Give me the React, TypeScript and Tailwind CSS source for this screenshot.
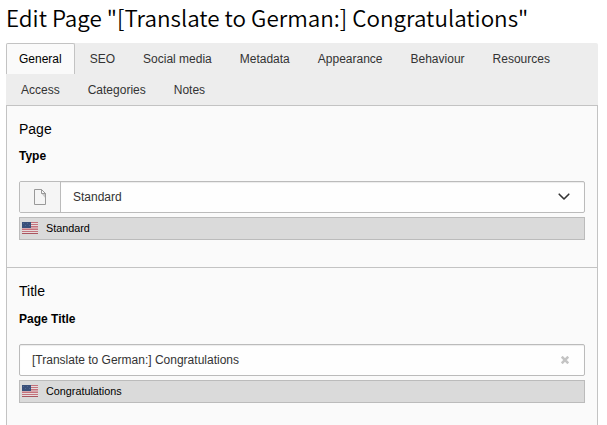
import React from "react";

const tabs = ["General", "SEO", "Social media", "Metadata", "Appearance", "Behaviour", "Resources", "Access", "Categories", "Notes"];

function UsFlag() {
  return (
    <svg width="16" height="12" viewBox="0 0 16 12" shapeRendering="crispEdges" className="shrink-0">
      <rect width="16" height="12" fill="#e6dcdd" />
      {[0, 2, 4, 7, 9].map((y) => (
        <rect key={y} y={y} width="16" height="1" fill="#c4727c" />
      ))}
      <rect y="5" width="16" height="2" fill="#d5a5ab" />
      <rect y="11" width="16" height="1" fill="#a95660" />
      <rect width="9" height="6" fill="#39507a" />
      {[1, 3, 5, 7].map((x) => (
        <rect key={x} x={x} y={x % 4 === 1 ? 1 : 3} width="1" height="1" fill="#526790" />
      ))}
    </svg>
  );
}

function PageIcon() {
  return (
    <svg width="16" height="16" viewBox="0 0 16 16">
      <path d="M9 4h5v6z" fill="#c8c8c8" />
      <path d="M2.5 .5H9.5L13.5 4.5V15.5H2.5z" fill="none" stroke="#999" />
      <path d="M9.5 .5V4.5H13.5" fill="none" stroke="#999" />
    </svg>
  );
}

function Translation({ text }: { text: string }) {
  return (
    <div className="mt-1 flex h-[23px] items-center border border-[#bbb] bg-[#dadada] pb-px pl-0.5 text-[10.8px] leading-4 text-black">
      <UsFlag />
      <span className="ml-2">{text}</span>
    </div>
  );
}

function Section({ title, label, labelGap, children }: { title: string; label: string; labelGap: string; children: React.ReactNode }) {
  return (
    <section className="h-[162px] border-b border-[#c3c3c3] px-3 pt-[13px]">
      <h2 className="h-5 text-[14px] leading-5 text-black">{title}</h2>
      <div className={`${labelGap} h-[34px] text-[12px] leading-[18px] font-bold text-black`}>{label}</div>
      {children}
    </section>
  );
}

export default function App() {
  return (
    <main className="h-[425px] w-[607px] overflow-hidden bg-white pl-1.5 font-['Liberation_Sans',Arial,sans-serif] text-[12px] leading-[18px]">
      <h1 className="h-[43px] pt-px font-['Noto_Sans_CJK_SC',sans-serif] text-[22.42px] leading-[32px] font-[350] whitespace-nowrap text-black">
        Edit Page "[Translate to German:] Congratulations"
      </h1>
      <div className="w-[592px]">
        <nav className="flex flex-wrap rounded-t-xs bg-[#ededed]">
          {tabs.map((tab, i) => (
            <button
              key={tab}
              className={
                i === 0
                  ? "h-[31px] rounded-t-xs border border-b-0 border-[#c3c3c3] bg-[#fafafa] px-3 text-black"
                  : "ml-0.5 h-[31px] px-[13px] text-[#333]"
              }
            >
              {tab}
            </button>
          ))}
        </nav>
        <div className="h-[340px] border border-[#c3c3c3] bg-[#fafafa]">
          <Section title="Page" label="Type" labelGap="mt-2">
            <div className="flex h-8 items-center overflow-hidden rounded-xs border border-[#bbb] bg-[#fefefe] text-[#333] shadow-[inset_0_1px_1px_rgba(0,0,0,0.075)]">
              <span className="flex h-full w-[41px] items-center justify-center border-r border-[#bbb] bg-[#f5f5f5]">
                <PageIcon />
              </span>
              <span className="ml-3">Standard</span>
              <svg className="mr-[14px] ml-auto" width="12" height="8" viewBox="0 0 12 8" fill="none" stroke="#333" strokeWidth="1.6" strokeLinecap="round" strokeLinejoin="round">
                <path d="M1.2 1.2L6 6L10.8 1.2" />
              </svg>
            </div>
            <Translation text="Standard" />
          </Section>
          <Section title="Title" label="Page Title" labelGap="mt-[9px]">
            <div className="flex h-8 items-center rounded-xs border border-[#bbb] bg-[#fefefe] pl-3 text-[#333] shadow-[inset_0_1px_1px_rgba(0,0,0,0.075)]">
              <span>[Translate to German:] Congratulations</span>
              <svg className="mr-[15px] ml-auto" width="8" height="8" viewBox="0 0 8 8" stroke="#c4c4c4" strokeWidth="2.6">
                <path d="M.7 .7L7.3 7.3M7.3 .7L.7 7.3" />
              </svg>
            </div>
            <Translation text="Congratulations" />
          </Section>
        </div>
      </div>
    </main>
  );
}
